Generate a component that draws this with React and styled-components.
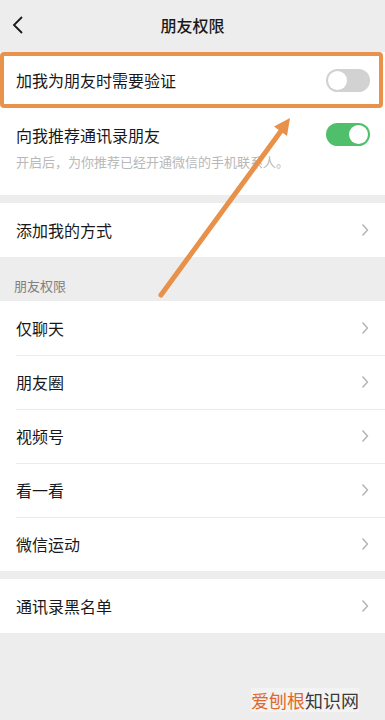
import styled, { createGlobalStyle } from "styled-components";

const GlobalStyle = createGlobalStyle`
  html, body {
    margin: 0;
    padding: 0;
    background: #ededed;
  }
  body {
    font-family: "Noto Sans CJK SC", "Noto Sans", sans-serif;
    color: #191919;
  }
`;

const permissionItems = ["仅聊天", "朋友圈", "视频号", "看一看", "微信运动"];

const Chevron = () => (
  <svg width="8" height="14" viewBox="0 0 8 14">
    <path d="M1.5 1.5 L6.5 7 L1.5 12.5" fill="none" stroke="#b2b2b2" strokeWidth="1.4" />
  </svg>
);

const BackIcon = () => (
  <svg width="12" height="20" viewBox="0 0 12 20">
    <path d="M10 2 L2 10 L10 18" fill="none" stroke="#191919" strokeWidth="1.8" />
  </svg>
);

const Arrow = () => (
  <ArrowLayer width="385" height="720" viewBox="0 0 385 720">
    <line x1="161" y1="295" x2="281" y2="131" stroke="#e8914a" strokeWidth="5" strokeLinecap="round" />
    <polygon points="290,118 287,136 274,126.5" fill="#e8914a" />
  </ArrowLayer>
);

export default function App() {
  return (
    <Page>
      <GlobalStyle />
      <TopBar>
        <BackButton>
          <BackIcon />
        </BackButton>
        <Title>朋友权限</Title>
      </TopBar>

      <Group>
        <Row highlight>
          <Label>加我为朋友时需要验证</Label>
          <Switch />
        </Row>
        <TallRow>
          <TextBlock>
            <Label>向我推荐通讯录朋友</Label>
            <SubLabel>开启后，为你推荐已经开通微信的手机联系人。</SubLabel>
          </TextBlock>
          <Switch on />
        </TallRow>
      </Group>

      <Group gap>
        <Row>
          <Label>添加我的方式</Label>
          <Chevron />
        </Row>
      </Group>

      <SectionHeader>朋友权限</SectionHeader>
      <Group>
        {permissionItems.map((item, i) => (
          <Row key={item} divider={i > 0}>
            <Label>{item}</Label>
            <Chevron />
          </Row>
        ))}
      </Group>

      <Group gap>
        <Row>
          <Label>通讯录黑名单</Label>
          <Chevron />
        </Row>
      </Group>

      <Footer>
        <Watermark>
          <em>爱刨根</em>知识网
        </Watermark>
      </Footer>

      <Arrow />
    </Page>
  );
}

const Page = styled.div`
  position: relative;
  width: 385px;
  height: 720px;
  overflow: hidden;
  display: flex;
  flex-direction: column;
  background: #ededed;
`;

const TopBar = styled.div`
  height: 52px;
  flex-shrink: 0;
  display: flex;
  align-items: center;
  justify-content: center;
  position: relative;
`;

const BackButton = styled.div`
  position: absolute;
  left: 12px;
  top: 15px;
  display: flex;
`;

const Title = styled.div`
  font-size: 16px;
  font-weight: 500;
  line-height: 22px;
  margin-top: -2px;
`;

const Group = styled.div`
  background: #fff;
  margin-top: ${(p) => (p.gap ? "8px" : "0")};
  flex-shrink: 0;
`;

const Row = styled.div`
  position: relative;
  height: 54px;
  padding: 0 16px;
  display: flex;
  align-items: center;
  justify-content: space-between;
  box-sizing: border-box;

  ${(p) =>
    p.divider &&
    `
    &::before {
      content: "";
      position: absolute;
      left: 16px;
      right: 0;
      top: 0;
      border-top: 1px solid #ececec;
    }
  `}

  ${(p) =>
    p.highlight &&
    `
    height: 56px;
    &::after {
      content: "";
      position: absolute;
      left: 0;
      right: 2px;
      top: 0;
      bottom: 0;
      border: 4px solid #e9924c;
      border-radius: 4px;
    }
  `}
`;

const TallRow = styled(Row)`
  height: 87px;
  align-items: flex-start;
  padding-top: 16px;
`;

const TextBlock = styled.div`
  display: flex;
  flex-direction: column;
  gap: 7px;
`;

const Label = styled.div`
  font-size: 16px;
  line-height: 22px;
  color: #191919;
`;

const SubLabel = styled.div`
  font-size: 13px;
  line-height: 18px;
  color: #b8b8b8;
`;

const Switch = styled.div`
  position: relative;
  width: 44px;
  height: 23px;
  border-radius: 12px;
  background: ${(p) => (p.on ? "#4fbf6b" : "#d2d2d2")};
  flex-shrink: 0;
  margin-right: -1px;
  ${(p) => (p.on ? "margin-top: -1px;" : "")}

  &::after {
    content: "";
    position: absolute;
    top: 2px;
    left: ${(p) => (p.on ? "23px" : "2px")};
    width: 19px;
    height: 19px;
    border-radius: 50%;
    background: #fff;
  }
`;

const SectionHeader = styled.div`
  height: 44px;
  flex-shrink: 0;
  box-sizing: border-box;
  padding: 20px 14px 0;
  font-size: 13px;
  line-height: 18px;
  color: #808080;
`;

const Footer = styled.div`
  flex: 1;
  display: flex;
  align-items: flex-end;
  justify-content: flex-end;
  padding: 0 26px 8px 0;
`;

const Watermark = styled.div`
  font-size: 18px;
  line-height: 24px;
  color: #3a3a3a;
  background: rgba(255, 255, 255, 0.35);

  em {
    font-style: normal;
    color: #e0692b;
  }
`;

const ArrowLayer = styled.svg`
  position: absolute;
  left: 0;
  top: 0;
  pointer-events: none;
`;
